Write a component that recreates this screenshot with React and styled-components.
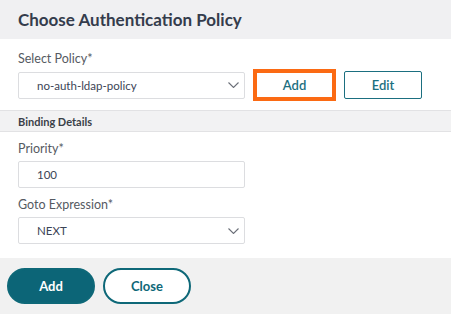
import styled, { createGlobalStyle } from "styled-components";

const Global = createGlobalStyle`
  html, body {
    margin: 0;
    padding: 0;
    background: #ffffff;
  }
  body {
    font-family: Lato, "Open Sans", "Liberation Sans", sans-serif;
    color: #333;
  }
`;

function Chevron() {
  return (
    <svg width="11" height="6" viewBox="0 0 11 6">
      <polyline points="0.5,0.5 5.5,5.5 10.5,0.5" fill="none" stroke="#6b6f78" strokeWidth="1.1" />
    </svg>
  );
}

function App() {
  return (
    <LDialog>
      <Global />
      <CHeader>Choose Authentication Policy</CHeader>
      <CBody $top={12}>
        <CLabel $bottom={2}>Select Policy*</CLabel>
        <CRow>
          <CSelect>
            <span>no-auth-ldap-policy</span>
            <Chevron />
          </CSelect>
          <CHighlight>
            <CButton>Add</CButton>
          </CHighlight>
          <CButton>Edit</CButton>
        </CRow>
      </CBody>
      <CSection>Binding Details</CSection>
      <CBody $top={9}>
        <CLabel>Priority*</CLabel>
        <CInput>100</CInput>
        <CLabel $top={9}>Goto Expression*</CLabel>
        <CSelect>
          <span>NEXT</span>
          <Chevron />
        </CSelect>
      </CBody>
      <CFooter>
        <CPill $primary>Add</CPill>
        <CPill>Close</CPill>
      </CFooter>
    </LDialog>
  );
}

export default App;

const LDialog = styled.div`
  width: 451px;
  height: 320px;
  display: flex;
  flex-direction: column;
  background: #fff;
`;

const CHeader = styled.div`
  height: 39px;
  box-sizing: border-box;
  padding: 0 18px;
  display: flex;
  align-items: center;
  background: #f0f0f2;
  color: #343c4c;
  font-size: 17px;
  font-weight: 700;
`;

const CBody = styled.div`
  padding: ${(p) => p.$top}px 18px 0;
  display: flex;
  flex-direction: column;
`;

const CLabel = styled.div`
  font-size: 12.5px;
  line-height: 16px;
  color: #555a62;
  margin-top: ${(p) => (p.$top ? `${p.$top}px` : "0")};
  margin-bottom: ${(p) => (p.$bottom !== undefined ? p.$bottom : 4)}px;
`;

const CRow = styled.div`
  display: flex;
  align-items: center;
  gap: 8px;
`;

const CSelect = styled.div`
  width: 227px;
  height: 27px;
  box-sizing: border-box;
  border: 1px solid #dcdde0;
  border-radius: 2px;
  display: flex;
  align-items: center;
  justify-content: space-between;
  padding: 0 5px 0 18px;
  font-size: 11.5px;
  color: #3b4456;
  background: #fff;
`;

const CInput = styled(CSelect)`
  justify-content: flex-start;
`;

const CHighlight = styled.div`
  border: 4px solid #fb6a13;
  padding: 0;
  display: flex;
`;

const CButton = styled.div`
  width: 78px;
  height: 28px;
  box-sizing: border-box;
  border: 1px solid #1b6f80;
  border-radius: 2px;
  display: flex;
  align-items: center;
  justify-content: center;
  color: #1b6f80;
  font-size: 13px;
  font-weight: 600;
  background: #fff;
  ${CHighlight} & {
    width: 75px;
    height: 24px;
    border-color: #fff;
  }
`;

const CSection = styled.div`
  margin-top: 9px;
  height: 22px;
  box-sizing: border-box;
  border-top: 1px solid #e2e2e4;
  border-bottom: 1px solid #e2e2e4;
  background: #f2f2f3;
  padding: 0 18px;
  display: flex;
  align-items: center;
  font-size: 11px;
  font-weight: 700;
  color: #3a3f48;
`;

const CFooter = styled.div`
  margin-top: 14px;
  height: 56px;
  box-sizing: border-box;
  background: #f1f1f1;
  padding: 10px 7px;
  display: flex;
  gap: 8px;
`;

const CPill = styled.div`
  width: 88px;
  height: 36px;
  box-sizing: border-box;
  border-radius: 18px;
  border: 2px solid #0e6878;
  background: ${(p) => (p.$primary ? "#0c6577" : "#fff")};
  color: ${(p) => (p.$primary ? "#fff" : "#0e6878")};
  display: flex;
  align-items: center;
  justify-content: center;
  font-size: 13px;
  font-weight: 700;
`;
